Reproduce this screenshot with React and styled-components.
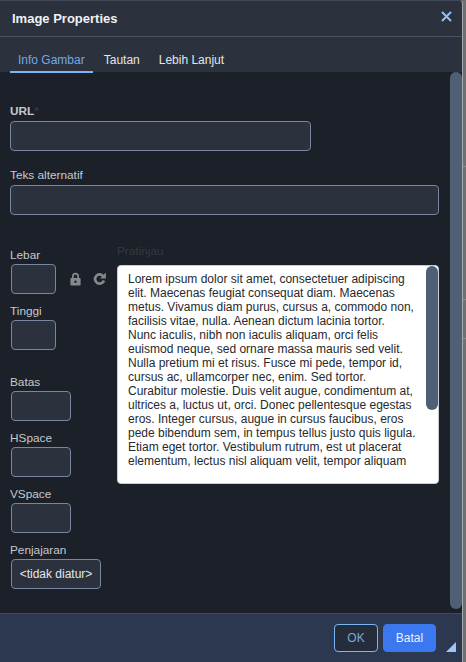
import React from 'react';
import styled, { createGlobalStyle } from 'styled-components';

const GlobalStyle = createGlobalStyle`
  html, body {
    margin: 0;
    padding: 0;
    height: 100%;
    background: #6f7071;
    overflow: hidden;
  }
  * { box-sizing: border-box; }
`;

const Page = styled.div`
  width: 466px;
  height: 662px;
  padding-right: 3px;
  font-family: "Liberation Sans", Arial, sans-serif;
  background:
    linear-gradient(#8b8c8e, #8b8c8e) right 0 top 166px / 3px 1px no-repeat,
    linear-gradient(#8b8c8e, #8b8c8e) right 0 top 299px / 3px 1px no-repeat,
    linear-gradient(#8b8c8e, #8b8c8e) right 0 top 338px / 3px 1px no-repeat,
    #6f7071;
`;

const Dialog = styled.div`
  position: relative;
  height: 100%;
  display: flex;
  flex-direction: column;
  background: #2b313d;
  border-top: 1px solid #414a5a;
  border-right: 1px solid #a4a7ab;
  border-top-right-radius: 4px;
  overflow: hidden;
`;

const Header = styled.header`
  height: 36px;
  flex: none;
  display: flex;
  align-items: center;
  justify-content: space-between;
  padding: 0 10px 0 12px;
  border-bottom: 1px solid #475163;
`;

const Title = styled.h1`
  margin: 0;
  font-size: 13px;
  font-weight: 700;
  color: #f0f2f5;
`;

const CloseButton = styled.span`
  display: flex;
  margin-top: -4px;
  color: #8fc0f5;
`;

const Tabs = styled.nav`
  height: 35px;
  flex: none;
  display: flex;
  align-items: flex-start;
  padding-left: 10px;
  gap: 3px;
  position: relative;
  z-index: 1;
`;

const Tab = styled.span`
  height: 36px;
  padding: 16px 8px 0;
  font-size: 12px;
  line-height: 14px;
  color: ${p => (p.$active ? '#74a9e6' : '#e4e6ea')};
  border-bottom: 2px solid ${p => (p.$active ? '#7cb5f5' : 'transparent')};
`;

const Body = styled.div`
  position: relative;
  flex: 1;
  min-height: 0;
  background: #1c2028;
  padding: 34px 0 0 10px;
`;

const Scrollbar = styled.div`
  position: absolute;
  top: 0;
  right: 0;
  width: 12px;
  height: 537px;
  background: #4f5f75;
  border-radius: 6px;
`;

const Field = styled.label`
  display: block;
  margin-bottom: ${p => p.$gap ?? 16}px;
`;

const Label = styled.div`
  font-size: 11.8px;
  line-height: 10px;
  height: 15px;
  color: #c6c9ce;
  font-weight: ${p => (p.$bold ? 700 : 400)};
`;

const Required = styled.span`
  color: #333944;
`;

const Input = styled.div`
  width: ${p => p.$w}px;
  height: 30px;
  margin-left: ${p => p.$inset ?? 0}px;
  background: #2b313d;
  border: 1px solid #79869f;
  border-radius: 4px;
`;

const Columns = styled.div`
  display: flex;
  margin-top: 34px;
`;

const LeftColumn = styled.div`
  width: 107px;
  flex: none;

  ${Label} {
    padding-top: 1px;
  }
`;

const SizeRow = styled.div`
  display: flex;
  align-items: center;
`;

const SizeIcons = styled.div`
  display: flex;
  gap: 11px;
  margin-left: 13px;
  color: #848990;
`;

const SelectBox = styled.div`
  width: 90px;
  height: 30px;
  margin-left: 1px;
  display: flex;
  align-items: center;
  justify-content: center;
  background: #2b313d;
  border: 1px solid #79869f;
  border-radius: 4px;
  font-size: 12px;
  color: #e4e6ea;
`;

const PreviewColumn = styled.div`
  width: 322px;
  margin-top: -4px;
`;

const PreviewLabel = styled.div`
  font-size: 11.8px;
  line-height: 13px;
  height: 20px;
  color: #333944;
`;

const PreviewBox = styled.div`
  position: relative;
  height: 219px;
  background: #fff;
  border: 1px solid #c9ccd2;
  border-radius: 4px;
  overflow: hidden;
  padding: 6px 22px 0 10px;
`;

const PreviewText = styled.p`
  margin: 0;
  font-size: 12px;
  line-height: 14px;
  color: #26292e;
`;

const PreviewThumb = styled.div`
  position: absolute;
  top: 0;
  right: 0;
  width: 12px;
  height: 144px;
  background: #4f5f75;
  border-radius: 6px;
`;

const Footer = styled.footer`
  position: relative;
  height: 49px;
  flex: none;
  display: flex;
  align-items: center;
  justify-content: flex-end;
  gap: 5px;
  padding-right: 26px;
  background: #2c3850;
  border-top: 1px solid #3d4a63;
`;

const Button = styled.span`
  height: 28px;
  display: flex;
  align-items: center;
  justify-content: center;
  width: ${p => p.$w}px;
  font-size: 12px;
  border-radius: 4px;
  color: ${p => (p.$primary ? '#e8effa' : '#7ba9dc')};
  background: ${p => (p.$primary ? '#3b78f0' : '#252c3a')};
  border: 1px solid ${p => (p.$primary ? '#3b78f0' : '#7cb5f5')};
`;

const ResizeHandle = styled.svg`
  position: absolute;
  right: 6px;
  bottom: 10px;
`;

const LOREM = 'Lorem ipsum dolor sit amet, consectetuer adipiscing elit. Maecenas feugiat consequat diam. Maecenas metus. Vivamus diam purus, cursus a, commodo non, facilisis vitae, nulla. Aenean dictum lacinia tortor. Nunc iaculis, nibh non iaculis aliquam, orci felis euismod neque, sed ornare massa mauris sed velit. Nulla pretium mi et risus. Fusce mi pede, tempor id, cursus ac, ullamcorper nec, enim. Sed tortor. Curabitur molestie. Duis velit augue, condimentum at, ultrices a, luctus ut, orci. Donec pellentesque egestas eros. Integer cursus, augue in cursus faucibus, eros pede bibendum sem, in tempus tellus justo quis ligula. Etiam eget tortor. Vestibulum rutrum, est ut placerat elementum, lectus nisl aliquam velit, tempor aliquam';

const LockIcon = () => (
  <svg width="13" height="14" viewBox="0 0 13 14" fill="currentColor">
    <path fillRule="evenodd" d="M3 6V4.2a3.5 3.5 0 0 1 7 0V6h.6c.6 0 1 .4 1 1v5.6c0 .6-.4 1-1 1H2.400c-.6 0-1-.4-1-1V7c0-.6.4-1 1-1H3zm1.700 0h3.600V4.200a1.800 1.800 0 0 0-3.600 0V6zM6.500 8.600a1.200 1.200 0 1 0 0 2.400 1.200 1.200 0 0 0 0-2.400z" />
  </svg>
);

const ReloadIcon = () => (
  <svg width="13" height="14" viewBox="0 0 13 14" fill="none">
    <path d="M10.300 4.300A4.600 4.600 0 1 0 11 8.500" stroke="currentColor" strokeWidth="2.700" />
    <path d="M12.900 .6v5.900H7z" fill="currentColor" />
  </svg>
);

const App = () => (
  <Page>
    <GlobalStyle />
    <Dialog>
      <Header>
        <Title>Image Properties</Title>
        <CloseButton>
          <svg width="11" height="11" viewBox="0 0 11 11">
            <path d="M1 1l9 9M10 1l-9 9" stroke="currentColor" strokeWidth="2" />
          </svg>
        </CloseButton>
      </Header>
      <Tabs>
        <Tab $active>Info Gambar</Tab>
        <Tab>Tautan</Tab>
        <Tab>Lebih Lanjut</Tab>
      </Tabs>
      <Body>
        <Scrollbar />
        <Field $gap={19}>
          <Label $bold>URL<Required>*</Required></Label>
          <Input $w={301} />
        </Field>
        <Field>
          <Label>Teks alternatif</Label>
          <Input $w={429} />
        </Field>
        <Columns>
          <LeftColumn>
            <Field $gap={11}>
              <Label>Lebar</Label>
              <SizeRow>
                <Input $w={45} $inset={1} />
                <SizeIcons><LockIcon /><ReloadIcon /></SizeIcons>
              </SizeRow>
            </Field>
            <Field $gap={26}>
              <Label>Tinggi</Label>
              <Input $w={45} $inset={1} />
            </Field>
            <Field $gap={11}>
              <Label>Batas</Label>
              <Input $w={60} $inset={1} />
            </Field>
            <Field $gap={11}>
              <Label>HSpace</Label>
              <Input $w={60} $inset={1} />
            </Field>
            <Field $gap={11}>
              <Label>VSpace</Label>
              <Input $w={60} $inset={1} />
            </Field>
            <Field $gap={0}>
              <Label>Penjajaran</Label>
              <SelectBox>&lt;tidak diatur&gt;</SelectBox>
            </Field>
          </LeftColumn>
          <PreviewColumn>
            <PreviewLabel>Pratinjau</PreviewLabel>
            <PreviewBox>
              <PreviewThumb />
              <PreviewText>{LOREM}</PreviewText>
            </PreviewBox>
          </PreviewColumn>
        </Columns>
      </Body>
      <Footer>
        <Button $w={44}>OK</Button>
        <Button $w={53} $primary>Batal</Button>
        <ResizeHandle width="10" height="10" viewBox="0 0 10 10">
          <path d="M10 0v10H0z" fill="#9cc6f5" />
        </ResizeHandle>
      </Footer>
    </Dialog>
  </Page>
);

export default App;
